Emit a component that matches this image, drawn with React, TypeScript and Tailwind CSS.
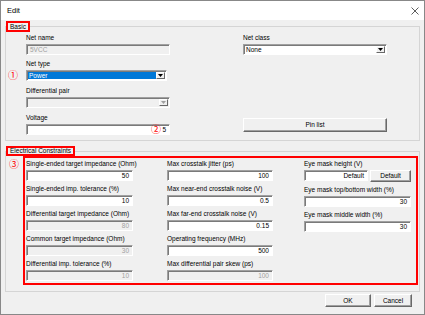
import React from 'react';

type BoxProps = {
  value?: string;
  disabled?: boolean;
  left?: boolean;
  className?: string;
};

function TextBox({ value = '', disabled, left, className = '' }: BoxProps) {
  return (
    <div
      className={`h-[11px] border border-t-[#a0a0a0] border-l-[#a0a0a0] border-r-white border-b-white shadow-[inset_1px_1px_0_#7a7a7a] leading-[9px] whitespace-nowrap ${
        left ? 'pl-[3px] text-left' : 'pr-[3px] text-right'
      } ${disabled ? 'bg-[#f0f0f0] text-[#a0a0a0]' : 'bg-white text-black'} ${className}`}
    >
      {value}
    </div>
  );
}

function Arrow({ disabled }: { disabled?: boolean }) {
  return (
    <div className="w-[9px] h-full flex items-center justify-center bg-[#f0f0f0] border border-t-white border-l-white border-r-[#696969] border-b-[#696969]">
      <svg width="5" height="3" viewBox="0 0 5 3">
        <polygon points="0,0 5,0 2.5,3" fill={disabled ? '#a0a0a0' : '#000000'} />
      </svg>
    </div>
  );
}

function ComboBox({
  value = '',
  disabled,
  selected,
  className = '',
}: {
  value?: string;
  disabled?: boolean;
  selected?: boolean;
  className?: string;
}) {
  return (
    <div
      className={`h-[11px] flex p-[1px] border border-t-[#a0a0a0] border-l-[#a0a0a0] border-r-white border-b-white shadow-[inset_1px_1px_0_#7a7a7a] ${
        disabled ? 'bg-[#f0f0f0]' : 'bg-white'
      } ${className}`}
    >
      <div
        className={`flex-1 pl-[1px] leading-[7px] ${
          selected ? 'bg-[#0078d7] text-white' : 'text-black'
        }`}
      >
        {value}
      </div>
      <Arrow disabled={disabled} />
    </div>
  );
}

function Button({ children, className = '' }: { children: React.ReactNode; className?: string }) {
  return (
    <div
      className={`flex items-center justify-center bg-[#f0f0f0] text-black border border-t-white border-l-white border-r-[#696969] border-b-[#696969] shadow-[inset_-1px_-1px_0_#a0a0a0] ${className}`}
    >
      {children}
    </div>
  );
}

function Label({ children }: { children: React.ReactNode }) {
  return <div className="h-[10px] leading-[10px] mb-[1px] whitespace-nowrap">{children}</div>;
}

function Mark({ children, className = '' }: { children: React.ReactNode; className?: string }) {
  return (
    <span
      className={`text-[10px] leading-[10px] text-[#ff0000] font-['Noto_Sans_CJK_JP',sans-serif] ${className}`}
    >
      {children}
    </span>
  );
}

type FieldData = { label: string; value: string; disabled?: boolean };

const col1: FieldData[] = [
  { label: 'Single-ended target impedance (Ohm)', value: '50' },
  { label: 'Single-ended imp. tolerance (%)', value: '10' },
  { label: 'Differential target impedance (Ohm)', value: '80', disabled: true },
  { label: 'Common target impedance (Ohm)', value: '30', disabled: true },
  { label: 'Differential imp. tolerance (%)', value: '10', disabled: true },
];

const col2: FieldData[] = [
  { label: 'Max crosstalk jitter (ps)', value: '100' },
  { label: 'Max near-end crosstalk noise (V)', value: '0.5' },
  { label: 'Max far-end crosstalk noise (V)', value: '0.15' },
  { label: 'Operating frequency (MHz)', value: '500' },
  { label: 'Max differential pair skew (ps)', value: '100', disabled: true },
];

function Field({ data }: { data: FieldData }) {
  return (
    <div>
      <Label>{data.label}</Label>
      <TextBox value={data.value} disabled={data.disabled} />
    </div>
  );
}

export default function App() {
  return (
    <div className="w-[425px] h-[315px] bg-[#f0f0f0] border border-[#888888] flex flex-col text-[6.5px] text-black font-['Liberation_Sans',Arial,sans-serif] overflow-hidden">
      <div className="h-[19px] shrink-0 bg-white flex items-center justify-between pl-[6px] pr-[5px]">
        <span className="text-[7.5px]">Edit</span>
        <svg width="8" height="8" viewBox="0 0 8 8">
          <path d="M0.5 0.5 L7.5 7.5 M7.5 0.5 L0.5 7.5" stroke="#333333" strokeWidth="0.8" />
        </svg>
      </div>

      <div className="px-[4px] flex flex-col">
        {/* Basic */}
        <fieldset className="mt-[1px] border border-[#d5d5d5] pb-[5px]">
          <legend className="h-[11px] border-2 border-[#ff0000] px-[2px] leading-[7px]">Basic</legend>
          <div className="flex pl-[20px] pt-[1px]">
            <div className="w-[144px] flex flex-col">
              <Label>Net name</Label>
              <TextBox value="5VCC" disabled left />
              <div className="mt-[4px]">
                <Label>Net type</Label>
                <div className="relative">
                  <Mark className="absolute -left-[18px] top-0">①</Mark>
                  <ComboBox value="Power" selected className="w-[141px]" />
                </div>
              </div>
              <div className="mt-[5px]">
                <Label>Differential pair</Label>
                <ComboBox disabled />
              </div>
              <div className="mt-[5px]">
                <Label>Voltage</Label>
                <div className="relative">
                  <TextBox value="5" />
                  <Mark className="absolute right-[9px] top-0">②</Mark>
                </div>
              </div>
            </div>
            <div className="ml-[73px] w-[144px] flex flex-col justify-between">
              <div>
                <Label>Net class</Label>
                <ComboBox value="None" />
              </div>
              <Button className="h-[14px] mb-[3px]">Pin list</Button>
            </div>
          </div>
        </fieldset>

        {/* Electrical Constraints */}
        <fieldset className="mt-[5px] border border-[#d5d5d5] pb-[6px]">
          <legend className="h-[10px] border-2 border-[#ff0000] px-[2px] leading-[6px]">
            Electrical Constraints
          </legend>
          <div className="flex">
            <div className="w-[17px] pl-[3px] pt-[3px]">
              <Mark>③</Mark>
            </div>
            <div className="flex-1 mr-[1px] border-2 border-[#ff0000] flex pl-[1px] pt-[1px] pb-[2px]">
              <div className="w-[107px] flex flex-col gap-[3px]">
                {col1.map((f) => (
                  <Field key={f.label} data={f} />
                ))}
              </div>
              <div className="ml-[34px] w-[106px] flex flex-col gap-[3px]">
                {col2.map((f) => (
                  <Field key={f.label} data={f} />
                ))}
              </div>
              <div className="ml-[31px] w-[107px] flex flex-col gap-[3px]">
                <div>
                  <Label>Eye mask height (V)</Label>
                  <div className="flex">
                    <TextBox value="Default" className="w-[66px]" />
                    <Button className="ml-[2px] w-[41px] h-[12px] shrink-0">Default</Button>
                  </div>
                </div>
                <Field data={{ label: 'Eye mask top/bottom width (%)', value: '30' }} />
                <Field data={{ label: 'Eye mask middle width (%)', value: '30' }} />
              </div>
            </div>
          </div>
        </fieldset>

        <div className="flex justify-end gap-[3px] pr-[8px] mt-[2px]">
          <Button className="w-[46px] h-[13px]">OK</Button>
          <Button className="w-[38px] h-[13px]">Cancel</Button>
        </div>
      </div>
    </div>
  );
}
